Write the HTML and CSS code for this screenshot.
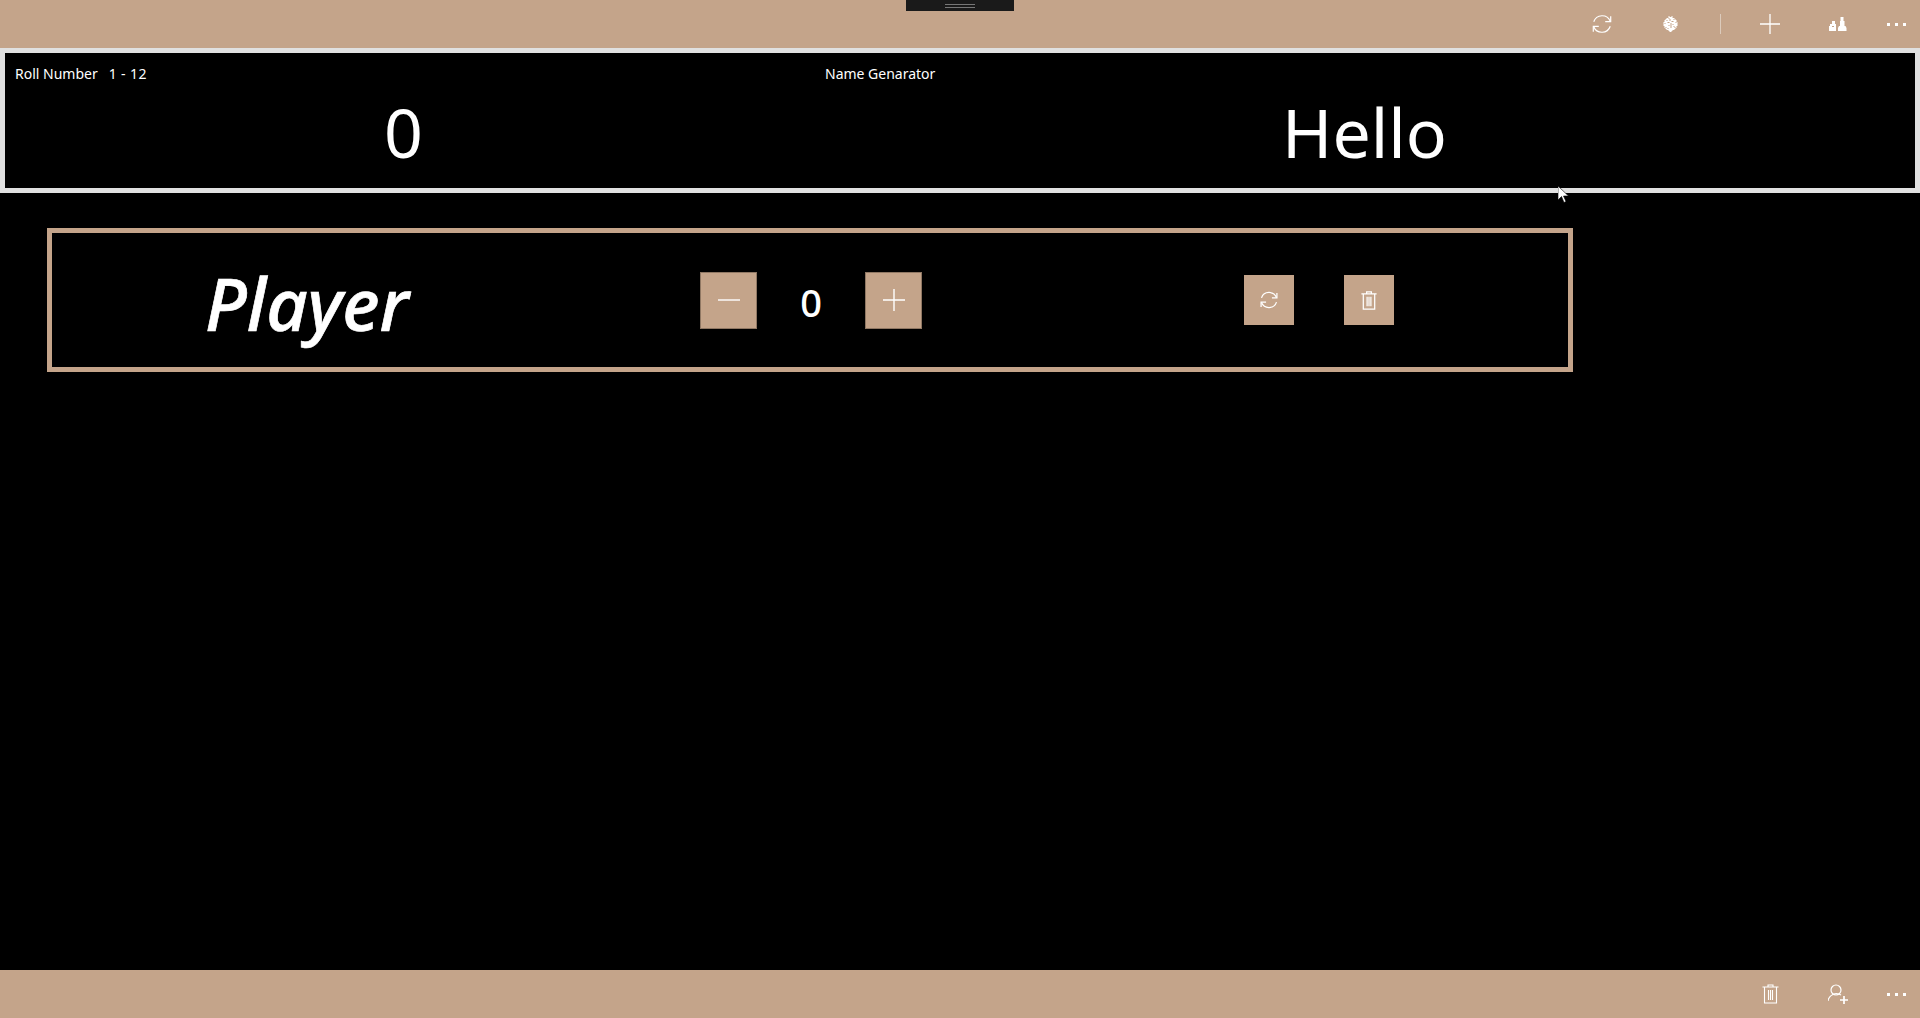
FILE: index.html
```html
<!DOCTYPE html>
<html lang="en">
<head>
<meta charset="utf-8">
<title>Name Genarator</title>
<link rel="stylesheet" href="styles.css">
</head>
<body>
<div class="app">
  <header class="appbar">
    <button class="bar-btn"><svg viewBox="0 0 24 24" class="ic ic-24"><path d="M3 9.500A9.600 9.600 0 0 1 21 9M21 14.500A9.600 9.600 0 0 1 3 15" /><path d="M21.500 3.500V9.500H15.500M2.500 20.500V14.500H8.500" /></svg></button>
    <button class="bar-btn"><svg viewBox="0 0 14 16" class="ic-fill ic-14"><path d="M5 0h1v1h2V0h1v2h2v1h1v1h1v2h1v4h-1v2h-1v1h-1v1H9v1H8v1H6v-1H5v-1H3v-1H2v-1H1v-2H0V6h1V4h1V3h1V2h2z"/><path fill="#c4a48a" d="M6 3h1v2H6zM8 5h2v1H8zM4 6h2v1H4zM7 7h1v5H7zM9 8h1v1H9zM3 4h1v1H3zM10 3h1v1h-1zM5 9h1v1H5zM11 11h1v1h-1zM2 11h1v1H2zM4 12h1v1H4zM1 7h1v1H1zM12 6h1v1h-1zM10 10h1v1h-1zM5 2h1v1H5z"/></svg></button>
    <span class="bar-sep"></span>
    <button class="bar-btn"><svg viewBox="0 0 20 20" class="ic ic-20"><path d="M0 10H20M10 0V20"/></svg></button>
    <button class="bar-btn"><svg viewBox="0 0 18 14" class="ic-fill ic-18"><path d="M3 4h3v3h1v7H0V9h1V7h2zM11.500 0h3v4h1v5h1l1 2v3H9v-3l1-2h1V4h.5z"/><path fill="#c4a48a" d="M3 9h2v1H3z"/></svg></button>
    <button class="bar-btn bar-more"><span></span><span></span><span></span></button>
  </header>

  <section class="score">
    <div class="score-heads">
      <div class="roll">Roll Number&nbsp;&nbsp; <span class="roll-range">1 - 12</span></div>
      <div class="gen">Name Genarator</div>
    </div>
    <div class="score-values">
      <div class="val-roll">0</div>
      <div class="val-name">Hello</div>
    </div>
  </section>

  <main class="content">
    <article class="player">
      <div class="player-name">Player</div>
      <div class="stepper">
        <button class="sq sq-big"><svg viewBox="0 0 22 22" class="ic ic-22"><path d="M0 11H22"/></svg></button>
        <div class="count">0</div>
        <button class="sq sq-big"><svg viewBox="0 0 22 22" class="ic ic-22"><path d="M0 11H22M11 0V22"/></svg></button>
      </div>
      <div class="actions">
        <button class="sq sq-small"><svg viewBox="0 0 24 24" class="ic ic-20b"><path d="M3 9.500A9.600 9.600 0 0 1 21 9M21 14.500A9.600 9.600 0 0 1 3 15" /><path d="M21.500 3.500V9.500H15.500M2.500 20.500V14.500H8.500" /></svg></button>
        <button class="sq sq-small"><svg viewBox="0 0 16 20" class="ic ic-trash"><path d="M0 3H16M2 3V19H14V3M5.500 3V1H10.500V3M6 6V16M8 6V16M10 6V16"/></svg></button>
      </div>
    </article>
  </main>

  <footer class="appbar appbar-bottom">
    <button class="bar-btn"><svg viewBox="0 0 16 20" class="ic ic-trash2"><path d="M0 3H16M2 3V19H14V3M5.500 3V1H10.500V3M6 6V16M8 6V16M10 6V16"/></svg></button>
    <button class="bar-btn"><svg viewBox="0 0 20 20" class="ic ic-user"><circle cx="8" cy="6" r="5"/><path d="M0 17A8.500 8.500 0 0 1 13 11"/><path class="thick" d="M12 16H20M16 12V20"/></svg></button>
    <button class="bar-btn bar-more"><span></span><span></span><span></span></button>
  </footer>
</div>
<div class="handle"><i></i><i></i></div>
<svg class="cursor" viewBox="0 0 12 18"><path d="M0 0V14L3.500 10.500L6 16.500L8 15.500L5.500 10H10.500Z"/></svg>
</body>
</html>
```
FILE: styles.css
```css
* { box-sizing: border-box; }
html, body { margin: 0; height: 100%; background: #000; overflow: hidden; }
body { font-family: "Noto Sans", "Open Sans", sans-serif; color: #fff; }
button { border: 0; padding: 0; margin: 0; background: none; display: flex; align-items: center; justify-content: center; }

.app { height: 1018px; display: flex; flex-direction: column; }

.appbar { height: 48px; flex: none; background: #c4a48a; display: flex; align-items: center; justify-content: flex-end; }
.appbar-bottom { margin-top: auto; }

.bar-btn { width: 68px; height: 48px; }
.bar-sep { width: 1px; height: 20px; background: #dccbbc; margin: 0 15px 0 16px; }
.bar-more { width: 48px; gap: 5px; padding-top: 1px; }
.bar-more span { width: 3px; height: 3px; background: #fff; }

.ic { fill: none; stroke: #fff; stroke-width: 1.3; display: block; }
.ic-fill { fill: #fff; display: block; }
.ic-24 { width: 22px; height: 22px; }
.ic-14 { width: 15px; height: 16px; }
.ic-20 { width: 20px; height: 20px; }
.ic-18 { width: 18px; height: 14px; }
.ic-22 { width: 22px; height: 22px; stroke-width: 1.4; }
.ic-20b { width: 20px; height: 20px; stroke-width: 1.5; }
.ic-trash { width: 16px; height: 19px; stroke-width: 1.3; }
.ic-trash2 { width: 17px; height: 20px; stroke-width: 1.1; }
.ic-user { width: 20px; height: 20px; stroke-width: 1.2; }
.thick { stroke-width: 1.7; }

.score { height: 145px; flex: none; border: 5px solid #e0e0e0; background: #000; display: flex; flex-direction: column; }
.score-heads { display: grid; grid-template-columns: 810px 1fr; padding: 11px 0 0 10px; font-size: 14px; line-height: 20px; }
.roll-range { letter-spacing: 0.4px; }
.score-values { display: grid; grid-template-columns: 800px 1fr; font-size: 68px; line-height: 92px; margin-top: 2px; }
.val-roll { text-align: right; padding-right: 382px; }
.val-name { padding-left: 477px; }

.content { flex: 1; padding: 35px 0 0 47px; }
.player { width: 1526px; height: 144px; border: 5px solid #c4a48a; display: flex; align-items: center; }
.player-name { width: 648px; padding-left: 153px; font-size: 72px; font-style: italic; font-weight: 500; -webkit-text-stroke: 0.7px #fff; line-height: 92px; margin-top: 6px; }
.stepper { display: flex; align-items: center; }
.count { width: 108px; text-align: center; font-size: 38px; line-height: 50px; font-weight: 500; padding-top: 3px; }
.sq { background: #c4a48a; }
.sq-big { width: 57px; height: 57px; border: 1px solid #8f7763; }
.sq-small { width: 50px; height: 50px; }
.actions { display: flex; gap: 50px; margin-left: 322px; }

.handle { position: absolute; left: 906px; top: 0; width: 108px; height: 11px; background: #1a1a1a; display: flex; flex-direction: column; align-items: center; gap: 2px; padding-top: 4px; }
.handle i { display: block; width: 30px; height: 1px; background: #777; }
.cursor { position: absolute; left: 1558px; top: 186px; width: 12px; height: 18px; fill: #fff; stroke: #000; stroke-width: .6; }
```
